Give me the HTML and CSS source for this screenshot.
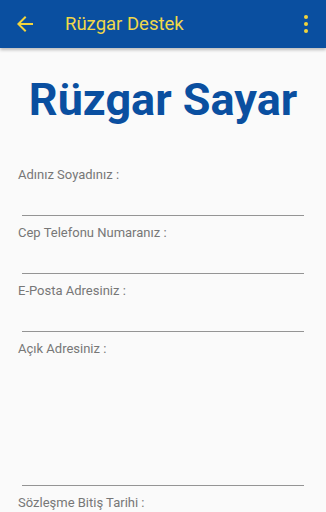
FILE: index.html
```html
<!DOCTYPE html>
<html lang="tr">

<head>
    <meta charset="UTF-8">
    <meta name="viewport" content="width=device-width, initial-scale=1.0">
    <title>Rüzgar Destek</title>
    <link rel="stylesheet" href="styles.css">
</head>

<body>
    <div class="toolbar">
        <div class="back">
            <svg width="24" height="24" viewBox="0 0 24 24">
                <path d="M20 11H7.83l5.59-5.59L12 4l-8 8 8 8 1.41-1.41L7.83 13H20v-2z" fill="#f2d43c" />
            </svg>
        </div>
        <div class="title">Rüzgar Destek</div>
        <div class="menu">
            <span></span>
            <span></span>
            <span></span>
        </div>
    </div>

    <div class="content">
        <h1 class="heading">Rüzgar Sayar</h1>

        <div class="field">
            <div class="label">Adınız Soyadınız :</div>
            <div class="input"></div>
        </div>
        <div class="field">
            <div class="label">Cep Telefonu Numaranız :</div>
            <div class="input"></div>
        </div>
        <div class="field">
            <div class="label">E-Posta Adresiniz :</div>
            <div class="input"></div>
        </div>
        <div class="field">
            <div class="label">Açık Adresiniz :</div>
            <div class="input tall"></div>
        </div>
        <div class="field">
            <div class="label">Sözleşme Bitiş Tarihi :</div>
            <div class="input"></div>
        </div>
    </div>
</body>

</html>
```

FILE: styles.css
```css
body {
    margin: 0;
    background: #fafafa;
    font-family: Roboto, "Liberation Sans", sans-serif;
    overflow: hidden;
}

.toolbar {
    height: 48px;
    background: #0a4fa0;
    display: flex;
    align-items: center;
    box-shadow: 0 2px 3px rgba(0, 0, 0, 0.25);
    position: relative;
}

.back {
    width: 52px;
    padding-left: 13px;
    display: flex;
    align-items: center;
}

.title {
    flex: 1;
    color: #f0d84a;
    font-size: 18.5px;
    padding-bottom: 1px;
}

.menu {
    width: 40px;
    display: flex;
    flex-direction: column;
    align-items: center;
    gap: 3px;
}

.menu span {
    width: 4px;
    height: 4px;
    border-radius: 50%;
    background: #f2d43c;
}

.content {
    padding: 0 22px 0 18px;
}

.heading {
    margin: 27px 0 0;
    text-align: center;
    color: #0a4fa0;
    font-size: 45px;
    font-weight: bold;
    line-height: 50px;
    padding-left: 4px;
}

.field {
    padding-top: 9px;
}

.heading + .field {
    padding-top: 42px;
}

.label {
    color: #777;
    font-size: 13px;
    line-height: 15px;
}

.input {
    height: 33px;
    margin-left: 4px;
    border-bottom: 1px solid #949494;
}

.input.tall {
    height: 129px;
}
```
